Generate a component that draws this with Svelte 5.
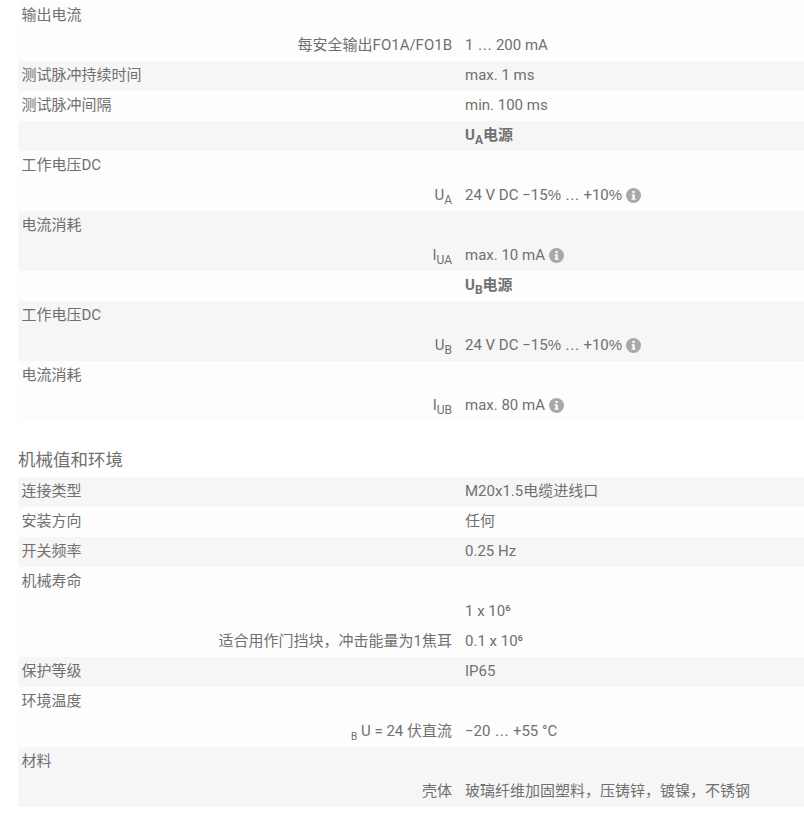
<script>
  const groupA = [
    { lines: [{ l: '输出电流' }, { r: '每安全输出FO1A/FO1B', v: '1 … 200 mA' }] },
    { lines: [{ l: '测试脉冲持续时间', v: 'max. 1 ms' }] },
    { lines: [{ l: '测试脉冲间隔', v: 'min. 100 ms' }] },
    { lines: [{ head: 'A' }] },
    { lines: [{ l: '工作电压DC' }, { sym: 'U', sub: 'A', v: '24 V DC −15% … +10%', info: true }] },
    { lines: [{ l: '电流消耗' }, { sym: 'I', sub: 'UA', v: 'max. 10 mA', info: true }] },
    { lines: [{ head: 'B' }] },
    { lines: [{ l: '工作电压DC' }, { sym: 'U', sub: 'B', v: '24 V DC −15% … +10%', info: true }] },
    { lines: [{ l: '电流消耗' }, { sym: 'I', sub: 'UB', v: 'max. 80 mA', info: true }] }
  ];
  const groupB = [
    { lines: [{ l: '连接类型', v: 'M20x1.5电缆进线口' }] },
    { lines: [{ l: '安装方向', v: '任何' }] },
    { lines: [{ l: '开关频率', v: '0.25 Hz' }] },
    { lines: [{ l: '机械寿命' }, { v: '1 x 10⁶' }, { r: '适合用作门挡块，冲击能量为1焦耳', v: '0.1 x 10⁶' }] },
    { lines: [{ l: '保护等级', v: 'IP65' }] },
    { lines: [{ l: '环境温度' }, { bu: true, v: '−20 … +55 °C' }] },
    { lines: [{ l: '材料' }, { r: '壳体', v: '玻璃纤维加固塑料，压铸锌，镀镍，不锈钢' }] }
  ];
  const sections = [
    { rows: groupA, odd: 'alt', even: 'gray' },
    { title: '机械值和环境', rows: groupB, odd: 'gray', even: 'alt' }
  ];
  // The ellipsis and percent sign are wider in the reference's face than in Roboto.
  const parts = (text) => (text ?? '').split(/([…%])/).filter(Boolean);
</script>

<div class="page">
  {#each sections as s}
    <section>
      {#if s.title}<h2>{s.title}</h2>{/if}
      {#each s.rows as row, i}
        <div class="row {i % 2 === 0 ? s.odd : s.even}">
          {#each row.lines as line}
            <div class="line">
              {#if line.head}
                <div class="key"></div>
                <div class="val head">U<sub>{line.head}</sub>电源</div>
              {:else}
                {#if line.l}
                  <div class="key left">{line.l}</div>
                {:else if line.sym}
                  <div class="key right">{line.sym}<sub>{line.sub}</sub></div>
                {:else if line.bu}
                  <div class="key right"><sub class="bsub">B</sub> U = 24 伏直流</div>
                {:else}
                  <div class="key right">{line.r ?? ''}</div>
                {/if}
                <div class="val">
                  {#each parts(line.v) as part}{#if part === '…' || part === '%'}<span class="wide">{part}</span>{:else}{part}{/if}{/each}
                  {#if line.info}
                    <svg class="info" viewBox="0 0 15 15" width="15" height="15" aria-hidden="true">
                      <circle cx="7.5" cy="7.5" r="7.5" fill="#a8a8a8" />
                      <rect x="6.4" y="2.9" width="2.3" height="2.2" fill="#fff" />
                      <path d="M5.6 6.2h3.1v4.3h1v1.2H5.5v-1.2h1v-3.1h-.9z" fill="#fff" />
                    </svg>
                  {/if}
                </div>
              {/if}
            </div>
          {/each}
        </div>
      {/each}
    </section>
  {/each}
</div>

<style>
  :global(body) {
    margin: 0;
    background: #fff;
  }
  .page {
    padding: 1px 0 18px 18px;
    font-family: Roboto, "Noto Sans CJK SC", sans-serif;
    font-size: 15px;
    color: #707070;
  }
  h2 {
    margin: 24px 0 0;
    height: 32px;
    font-size: 17.5px;
    font-weight: 400;
    line-height: 30px;
  }
  .row.gray { background: #f6f6f6; }
  .row.alt { background: #fdfdfd; }
  .line {
    display: grid;
    grid-template-columns: 438px 1fr;
    height: 30px;
    line-height: 28px;
  }
  .key { padding: 0 4px; }
  .key.left { padding-left: 3.5px; }
  .key.right { text-align: right; }
  .val { padding: 0 4px 0 9px; }
  .head { font-weight: 700; }
  .wide { font-family: "Liberation Sans", sans-serif; }
  sub {
    font-size: 12px;
    line-height: 0;
    vertical-align: -4px;
  }
  .bsub { font-size: 10px; }
  .info { vertical-align: -2.5px; }
</style>
